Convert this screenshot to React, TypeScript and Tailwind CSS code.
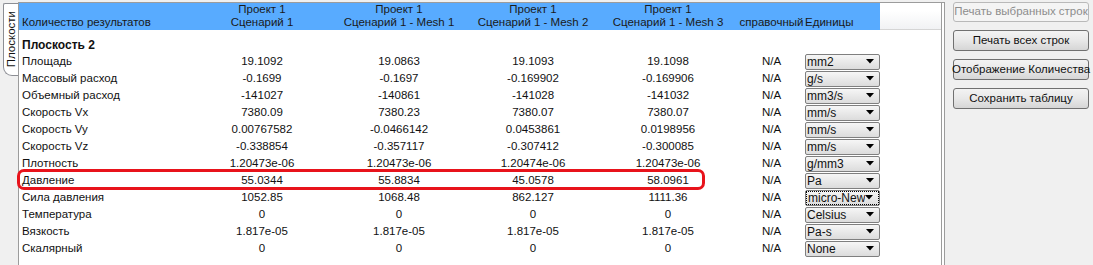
import React from "react";

// Table data
type Row = {
  name: string;
  values: string[];
  unit: string;
  focused?: boolean;
};

const rows: Row[] = [
  { name: "Площадь", values: ["19.1092", "19.0863", "19.1093", "19.1098"], unit: "mm2" },
  { name: "Массовый расход", values: ["-0.1699", "-0.1697", "-0.169902", "-0.169906"], unit: "g/s" },
  { name: "Объемный расход", values: ["-141027", "-140861", "-141028", "-141032"], unit: "mm3/s" },
  { name: "Скорость Vx", values: ["7380.09", "7380.23", "7380.07", "7380.07"], unit: "mm/s" },
  { name: "Скорость Vy", values: ["0.00767582", "-0.0466142", "0.0453861", "0.0198956"], unit: "mm/s" },
  { name: "Скорость Vz", values: ["-0.338854", "-0.357117", "-0.307412", "-0.300085"], unit: "mm/s" },
  { name: "Плотность", values: ["1.20473e-06", "1.20473e-06", "1.20474e-06", "1.20473e-06"], unit: "g/mm3" },
  { name: "Давление", values: ["55.0344", "55.8834", "45.0578", "58.0961"], unit: "Pa" },
  { name: "Сила давления", values: ["1052.85", "1068.48", "862.127", "1111.36"], unit: "micro-Newton", focused: true },
  { name: "Температура", values: ["0", "0", "0", "0"], unit: "Celsius" },
  { name: "Вязкость", values: ["1.817e-05", "1.817e-05", "1.817e-05", "1.817e-05"], unit: "Pa-s" },
  { name: "Скалярный", values: ["0", "0", "0", "0"], unit: "None" },
];

const colWidths = ["w-[136px]", "w-[138px]", "w-[130px]", "w-[140px]"];
const headers = ["Сценарий 1", "Сценарий 1 - Mesh 1", "Сценарий 1 - Mesh 2", "Сценарий 1 - Mesh 3"];

const Arrow = () => (
  <svg width="8" height="5" viewBox="0 0 8 5" className="shrink-0">
    <path d="M0 0 H8 L4 4.5 Z" fill="#000" />
  </svg>
);

const UnitSelect = ({ unit, focused }: { unit: string; focused?: boolean }) => (
  <div className="w-[75px] h-[16px] rounded-[2px] border border-[#7f7f7f] bg-gradient-to-b from-[#f6f6f6] to-[#dcdcdc] flex items-center">
    <div
      className={
        "flex-1 h-[14px] flex items-center pl-[1px] pr-[5px] overflow-hidden " +
        (focused ? "border border-dotted border-black" : "")
      }
    >
      <span className="flex-1 overflow-hidden whitespace-nowrap leading-[14px] text-[12px]">{unit}</span>
      <Arrow />
    </div>
  </div>
);

const Button = ({ label, disabled }: { label: string; disabled?: boolean }) => (
  <div
    className={
      "w-[136px] rounded-[3px] border flex items-center justify-center whitespace-nowrap " +
      (disabled
        ? "h-[20px] border-[#b9b9b9] bg-[#f4f4f4] text-[#8d8d8d]"
        : "h-[21px] border-[#707070] bg-gradient-to-b from-[#f3f3f3] via-[#e8e8e8] to-[#d6d6d6] text-[#111]")
    }
  >
    {label}
  </div>
);

export default function App() {
  return (
    <div className="relative w-[1093px] h-[265px] overflow-hidden bg-[#f0f0f0] flex text-[11.5px] text-[#111] font-['Liberation_Sans',Arial,sans-serif]">
      {/* Vertical tab */}
      <div className="w-[18px] shrink-0 pt-[3px] pl-[3px]">
        <div className="w-[15px] h-[73px] bg-white border-l border-t border-b border-[#8c8e94] rounded-tl-[2px] rounded-bl-[9px] flex items-center justify-center">
          <span className="[writing-mode:vertical-rl] rotate-180 leading-[14px] whitespace-nowrap">Плоскости</span>
        </div>
      </div>

      {/* Table panel */}
      <div className="mt-[2px] w-[927px] shrink-0 bg-white border-l border-t border-r border-[#9c9c9c] pr-[2px]">
        <div className="h-full border-r border-[#9c9c9c]">
          {/* Header */}
          <div className="flex h-[27px]">
            <div className="w-[861px] bg-[#58abff] flex items-end pb-[1px] leading-[13px] text-[#1a1a1a]">
              <div className="w-[175px] pl-[3px] whitespace-nowrap">Количество результатов</div>
              {headers.map((h, i) => (
                <div key={i} className={colWidths[i] + " flex flex-col items-center whitespace-nowrap"}>
                  <span>Проект 1</span>
                  <span>{h}</span>
                </div>
              ))}
              <div className="w-[67px] flex justify-center whitespace-nowrap">справочный</div>
              <div className="w-[75px] whitespace-nowrap">Единицы</div>
            </div>
            <div className="flex-1 bg-gradient-to-b from-white from-30% to-[#f1f2f4] border-b border-[#d5d5d5]" />
          </div>

          {/* Body */}
          <div className="pt-[6px]">
            <div className="h-[17px] flex items-center pl-[3px] font-bold text-[12px]">Плоскость 2</div>
            {rows.map((r) => (
              <div key={r.name} className="h-[17px] flex items-center">
                <div className="w-[175px] pl-[3px] whitespace-nowrap">{r.name}</div>
                {r.values.map((v, i) => (
                  <div key={i} className={colWidths[i] + " text-center whitespace-nowrap"}>
                    {v}
                  </div>
                ))}
                <div className="w-[67px] text-center">N/A</div>
                <UnitSelect unit={r.unit} focused={r.focused} />
              </div>
            ))}
          </div>
        </div>
      </div>

      {/* Right buttons */}
      <div className="pl-[8px] pt-[2px] flex flex-col gap-[8px]">
        <Button label="Печать выбранных строк" disabled />
        <Button label="Печать всех строк" />
        <Button label="Отображение Количества" />
        <Button label="Сохранить таблицу" />
      </div>

      {/* Highlight overlay */}
      <div className="absolute left-[17px] top-[169px] w-[688px] h-[21px] border-[3px] border-[#e8131b] rounded-[7px] pointer-events-none" />
    </div>
  );
}
